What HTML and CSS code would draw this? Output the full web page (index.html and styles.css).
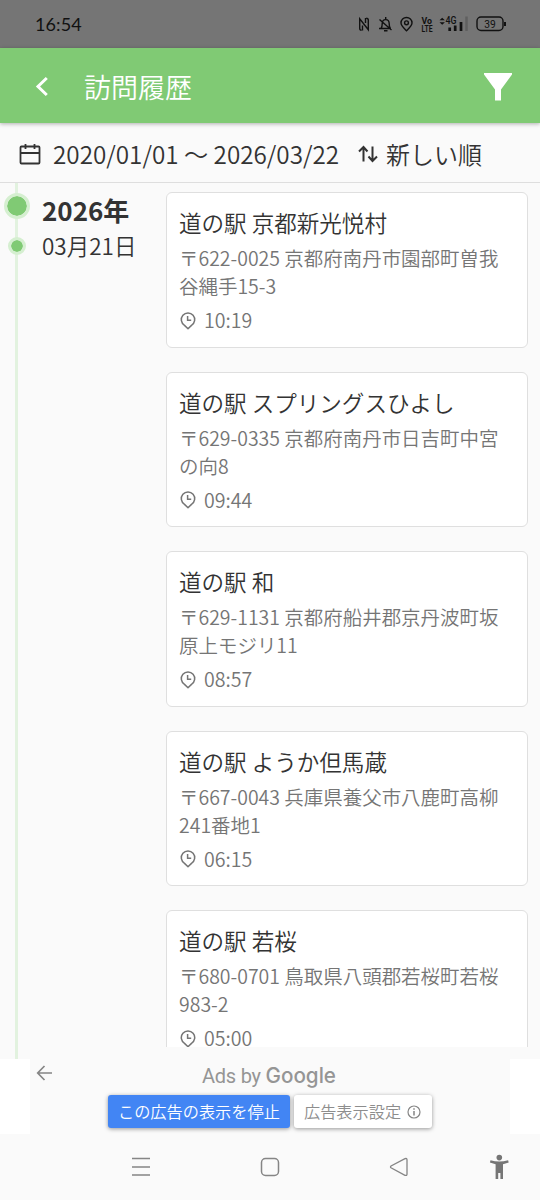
FILE: index.html
```html
<!DOCTYPE html>
<html lang="ja">
<head>
<meta charset="utf-8">
<meta name="viewport" content="width=device-width">
<title>訪問履歴</title>
<link rel="stylesheet" href="styles.css">
</head>
<body>
<div class="screen">
  <div class="status">
    <span class="clock">16:54</span>
    <svg class="status-icons" width="160" height="24" viewBox="0 0 160 24" fill="none" stroke="#111" stroke-width="1.400">
      <path d="M11.500 18.300c-1.500 0-1.800-.8-1.800-2V6.800l8.600 11V8.200c0-1.300-.4-2-2-2M12.500 13.500v5M15.500 6v5"/>
      <path d="M29 16.500H41M31 16.500c1.200-1.500 1.200-3 1.200-4.800 0-5.500 7-5.500 7 0 0 2 .1 3.300 1.100 4.800M34 18.800h3.500M35.700 5v2M29.500 7.500l12 10.500"/>
      <path d="M56.500 18.800c-3-3-5.500-5.300-5.500-7.800a5.500 5.500 0 0 1 11 0c0 2.500-2.500 4.800-5.500 7.800z"/><circle cx="56.500" cy="10.800" r="1.900"/>
      <text class="volte" x="71.500" y="11.800" textLength="10.500" lengthAdjust="spacingAndGlyphs">Vo</text>
      <text class="volte" x="71.500" y="19.800" textLength="11" lengthAdjust="spacingAndGlyphs">LTE</text>
      <path d="M89.500 8.300l2.700-2.500 2.700 2.500zM89.500 10.200l2.700 2.500 2.700-2.500z" fill="#111" stroke="none"/>
      <text class="net" x="95.500" y="11.800" textLength="11" lengthAdjust="spacingAndGlyphs">4G</text>
      <path d="M99.700 15.500V19M105.200 13.500V19M111 10V19" stroke-width="2.700"/>
      <path d="M116.500 4.500V19" stroke="#606060" stroke-width="2.500"/>
      <rect x="127" y="5" width="26" height="13.500" rx="4"/><path d="M155 10v4" stroke-width="2"/>
      <text class="battery" x="134.300" y="15.600" textLength="11.500" lengthAdjust="spacingAndGlyphs">39</text>
    </svg>
  </div>
  <header class="appbar">
    <svg class="back" width="14" height="22" viewBox="0 0 14 22" fill="none" stroke="#fff" stroke-width="3"><path d="M11.800 2L3 10.500l8.800 8.500"/></svg>
    <h1 class="title">訪問履歴</h1>
    <svg class="funnel" width="28" height="28" viewBox="0 0 28 28" fill="#fff"><path d="M0 0h28v1.500L17 16.500V27.500h-6V16.500L0 1.500z"/></svg>
  </header>
  <div class="filters">
    <svg class="calendar" width="22" height="22" viewBox="0 0 22 22" fill="none" stroke="#333" stroke-width="1.800"><rect x="1.500" y="3.500" width="19" height="17" rx="1"/><path d="M1.500 10h19M6.500 1v5M15.500 1v5"/></svg>
    <span class="range">2020/01/01 〜 2026/03/22</span>
    <svg class="sort" width="20" height="20" viewBox="0 0 20 20" fill="none" stroke="#333" stroke-width="2"><path d="M5.500 17.500V3M1 7.500L5.500 3l4 4.500M14.500 2.500v14.500M10.500 12.500l4 4.500 4.500-4.500"/></svg>
    <span class="order">新しい順</span>
  </div>
  <main class="history">
    <div class="timeline"><i class="dot dot-year"></i><i class="dot dot-day"></i></div>
    <div class="dates"><div class="year">2026年</div><div class="day">03月21日</div></div>
    <div class="cards">
      <article class="card"><h2 class="name">道の駅 京都新光悦村</h2><p class="address">〒622-0025 京都府南丹市園部町曽我<br>谷縄手15-3</p><p class="time"><svg class="pin" width="16" height="18" viewBox="0 0 16 18"><use href="#clock-pin"/></svg>10:19</p></article>
      <article class="card"><h2 class="name">道の駅 スプリングスひよし</h2><p class="address">〒629-0335 京都府南丹市日吉町中宮<br>の向8</p><p class="time"><svg class="pin" width="16" height="18" viewBox="0 0 16 18"><use href="#clock-pin"/></svg>09:44</p></article>
      <article class="card"><h2 class="name">道の駅 和</h2><p class="address">〒629-1131 京都府船井郡京丹波町坂<br>原上モジリ11</p><p class="time"><svg class="pin" width="16" height="18" viewBox="0 0 16 18"><use href="#clock-pin"/></svg>08:57</p></article>
      <article class="card"><h2 class="name">道の駅 ようか但馬蔵</h2><p class="address">〒667-0043 兵庫県養父市八鹿町高柳<br>241番地1</p><p class="time"><svg class="pin" width="16" height="18" viewBox="0 0 16 18"><use href="#clock-pin"/></svg>06:15</p></article>
      <article class="card"><h2 class="name">道の駅 若桜</h2><p class="address">〒680-0701 鳥取県八頭郡若桜町若桜<br>983-2</p><p class="time"><svg class="pin" width="16" height="18" viewBox="0 0 16 18"><use href="#clock-pin"/></svg>05:00</p></article>
    </div>
  </main>
  <div class="ad">
    <div class="ad-panel">
      <div class="ad-top">
        <svg class="ad-back" width="18" height="16" viewBox="0 0 18 16" fill="none" stroke="#858585" stroke-width="1.700"><path d="M16 8H2M8.500 1L1.700 8l6.800 7"/></svg>
        <svg class="ad-brand" width="140" height="28" viewBox="0 0 140 28"><text class="ads-by" x="1" y="22" textLength="59">Ads by</text><text class="google" x="64.500" y="22" textLength="70.500" lengthAdjust="spacingAndGlyphs">Google</text></svg>
      </div>
      <div class="ad-actions">
        <span class="btn btn-stop">この広告の表示を停止</span>
        <span class="btn btn-settings">広告表示設定<svg class="info" width="14" height="14" viewBox="0 0 14 14" fill="none" stroke="#858585" stroke-width="1.200"><circle cx="7" cy="7" r="6"/><path d="M7 6v4.500M7 3.300v1.500" stroke-width="1.500"/></svg></span>
      </div>
    </div>
  </div>
  <nav class="navbar">
    <svg class="nav-icons" width="540" height="66" viewBox="0 0 540 66" fill="none" stroke="#858585" stroke-width="1.500">
      <path d="M132 24.600h18M132 32.900h18M132 41.100h18"/>
      <rect x="261.500" y="24.500" width="17" height="17" rx="4"/>
      <path d="M391 32q-1 .9 0 1.800l14 7.500q2 .6 2-1V25.700q0-1.700-2-1z" stroke-width="1.300"/>
      <g fill="#757575" stroke="none"><circle cx="499.300" cy="23.600" r="2.800"/><path d="M490.500 26.300q8.800 2.500 17.600 0l.6 2.200-5.700 1.700V45h-2.600v-6h-2.200v6h-2.600V30.200l-5.700-1.700z"/></g>
    </svg>
  </nav>
</div>
<svg class="symbols" width="0" height="0"><defs><g id="clock-pin" fill="none" stroke="#757575" stroke-width="1.500"><path d="M8 16.700L4.500 13.400A6.700 6.700 0 1 1 11.500 13.400z" stroke-linejoin="round"/><path d="M7.600 4v4.200h3.600"/></g></defs></svg>
</body>
</html>
```
FILE: styles.css
```css
* { box-sizing: border-box; margin: 0; padding: 0; }
body { background: #fafafa; color: #333; font-family: "Noto Sans CJK JP", sans-serif; font-weight: 350; }
svg { display: block; flex: none; }
.screen { width: 540px; height: 1200px; display: flex; flex-direction: column; overflow: hidden; white-space: nowrap; }
.status { height: 48px; flex: none; background: #757575; display: flex; align-items: center; justify-content: space-between; padding: 0 30px 0 35px; }
.clock { font: 400 18px/24px Lato, sans-serif; letter-spacing: .1px; color: #111; }
.status-icons { width: 160px; }
.volte { font: 700 9px Roboto, sans-serif; fill: #111; stroke: none; }
.net { font: 500 11px Roboto, sans-serif; fill: #111; stroke: none; }
.battery { font: 400 10.500px Roboto, sans-serif; fill: #111; stroke: none; }
.appbar { height: 75px; flex: none; background: #80ca74; box-shadow: 0 1px 4px rgba(0,0,0,.3); display: flex; align-items: center; padding: 2px 28px 0 35px; position: relative; z-index: 1; }
.title { font-size: 27px; font-weight: 350; line-height: 40px; color: #fff; margin-left: 35px; }
.funnel { margin-left: auto; }
.filters { height: 60px; flex: none; border-bottom: 1px solid #dedede; display: flex; align-items: center; padding: 3px 0 0 19px; font-size: 24px; line-height: 36px; }
.range { margin-left: 12px; font-size: 24.250px; }
.sort { margin: 0 8px 0 19px; }
.history { height: 876px; flex: none; display: flex; overflow: hidden; }
.timeline { width: 3px; height: 876px; margin-left: 15px; background: #e2f2df; display: flex; flex-direction: column; align-items: center; }
.dot { flex: none; border-radius: 50%; background: #80ca74; border: 3px solid #d5efd0; background-clip: padding-box; }
.dot-year { width: 26px; height: 26px; margin-top: 10px; }
.dot-day { width: 18px; height: 18px; margin-top: 18px; }
.dates { width: 123.500px; margin-left: 24px; padding-top: 8px; }
.year { font-size: 26px; font-weight: 700; line-height: 38px; }
.day { font-size: 22.500px; line-height: 32px; }
.cards { width: 362.500px; height: 864px; overflow: hidden; padding-top: 9px; }
.card { height: 155.500px; margin-bottom: 24px; background: #fff; border: 1.500px solid #dfdfdf; border-radius: 6px; padding: 12px 0 0 12.500px; }
.name { font-size: 22.550px; font-weight: 350; line-height: 34px; }
.address { font-size: 19.480px; line-height: 28px; margin-top: 5px; color: #757575; }
.time { display: flex; align-items: center; font-size: 19.600px; line-height: 20px; margin-top: 10px; color: #757575; }
.pin { margin: 1px 8px 0 1px; }
.ad { height: 75px; flex: none; background: #fff; padding: 0 30px; }
.ad-panel { height: 75px; background: #fafafa; }
.ad-top { display: flex; height: 36px; }
.ad-back { margin: 6px 0 0 6px; }
.ad-brand { margin: 2px 0 0 147px; }
.ads-by { font: 400 20px Roboto, sans-serif; fill: #959595; }
.google { font: 500 21px Inter, sans-serif; fill: #959595; }
.ad-actions { display: flex; gap: 4px; padding-left: 78px; }
.btn { height: 33px; border-radius: 3px; box-shadow: 0 1px 4px rgba(0,0,0,.4); font-size: 16.200px; line-height: 33px; display: flex; align-items: center; padding-left: 10px; }
.btn-stop { width: 182px; background: #4285f4; color: #fff; }
.btn-settings { width: 138px; background: #fff; color: #8d8d8d; }
.info { margin-left: 6px; }
.navbar { height: 66px; flex: none; background: #fafafa; }
.symbols { position: absolute; }
```
